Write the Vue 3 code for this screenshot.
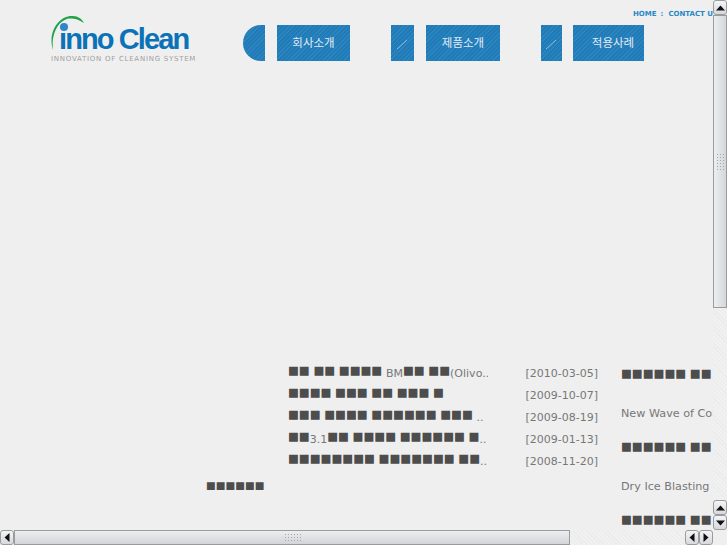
<script setup>
const navItems = [
  { label: '회사소개', cap: 'cap-round', capW: 22, gap: 12, w: 73, next: 41, slash: false, shift: false },
  { label: '제품소개', cap: '', capW: 23, gap: 12, w: 74, next: 41, slash: true, shift: false },
  { label: '적용사례', cap: '', capW: 21, gap: 11, w: 71, next: 0, slash: true, shift: true },
]
const T = (t) => ({ t, k: 'tofu' })
const L = (t) => ({ t, k: 'latin' })
const news = [
  { parts: [T('■■ ■■ ■■■■ '), L('BM'), T('■■ ■■'), L('(Olivo..')], date: '[2010-03-05]' },
  { parts: [T('■■■■ ■■■ ■■ ■■■ ■')], date: '[2009-10-07]' },
  { parts: [T('■■■ ■■■■ ■■■■■■ ■■■ '), L('..')], date: '[2009-08-19]' },
  { parts: [T('■■'), L('3.1'), T('■■ ■■■■ ■■■■■■ ■'), L('..')], date: '[2009-01-13]' },
  { parts: [T('■■■■■■■■ ■■■■■■■ ■■'), L('..')], date: '[2008-11-20]' },
]
const side = [
  { t: '■■■■■■ ■■', k: 'tofu' },
  { t: 'New Wave of Cold Jet', k: 'latin' },
  { t: '■■■■■■ ■■', k: 'tofu' },
  { t: 'Dry Ice Blasting', k: 'latin' },
  { t: '■■■■■■ ■■', k: 'tofu' },
]
</script>

<template>
  <div class="window">
    <main class="viewport">
      <div class="page">
        <header class="header">
          <div class="logo">
            <svg class="logo-mark" width="50" height="44" viewBox="0 0 50 44">
              <path d="M3 37 C-3 18 10 2 23 3 C28 3 32 6 34 10 C28 6 24 5 19 5.5 C9 7 1 20 3 37Z" fill="#1fa24a" />
              <circle cx="14" cy="14" r="4" fill="#2f86c8" />
            </svg>
            <div class="logo-name">inno Clean</div>
            <div class="logo-tag">INNOVATION OF CLEANING SYSTEM</div>
          </div>
          <nav class="nav">
            <div v-for="item in navItems" :key="item.label" class="nav-item" :style="{ marginRight: item.next + 'px' }">
              <div class="hatch cap" :class="item.cap" :style="{ width: item.capW + 'px', marginRight: item.gap + 'px' }">
                <svg v-if="item.slash" width="16" height="16" viewBox="0 0 16 16">
                  <path d="M2 14 L12 5" stroke="#8dbfe0" stroke-width="1" />
                </svg>
              </div>
              <div class="hatch nav-btn" :class="{ shifted: item.shift }" :style="{ width: item.w + 'px' }">{{ item.label }}</div>
            </div>
          </nav>
          <div class="top-links">
            <span>HOME</span><span class="sep">:</span><span>CONTACT US</span>
          </div>
        </header>
        <section class="content">
          <h2 class="side-title">■■■■■■</h2>
          <div class="news">
            <div v-for="row in news" :key="row.date" class="news-row">
              <div class="news-title">
                <span v-for="(p, i) in row.parts" :key="i" :class="p.k">{{ p.t }}</span>
              </div>
              <div class="news-date">{{ row.date }}</div>
            </div>
          </div>
          <ul class="side">
            <li v-for="(s, i) in side" :key="i" :class="s.k">{{ s.t }}</li>
          </ul>
        </section>
      </div>
    </main>

    <aside class="vbar">
      <button class="sb-btn v"><svg width="9" height="6" viewBox="0 0 9 6"><path d="M0 5.5 L4.5 0.5 L9 5.5Z" /></svg></button>
      <div class="thumb v-thumb"><i class="grip v-grip"></i></div>
      <div class="track"></div>
      <button class="sb-btn v"><svg width="9" height="6" viewBox="0 0 9 6"><path d="M0 5.5 L4.5 0.5 L9 5.5Z" /></svg></button>
      <button class="sb-btn v"><svg width="9" height="6" viewBox="0 0 9 6"><path d="M0 0.5 L4.5 5.5 L9 0.5Z" /></svg></button>
    </aside>

    <aside class="hbar">
      <button class="sb-btn h"><svg width="6" height="9" viewBox="0 0 6 9"><path d="M5.5 0 L0.5 4.5 L5.5 9Z" /></svg></button>
      <div class="thumb h-thumb"><i class="grip h-grip"></i></div>
      <div class="track"></div>
      <button class="sb-btn h"><svg width="6" height="9" viewBox="0 0 6 9"><path d="M5.5 0 L0.5 4.5 L5.5 9Z" /></svg></button>
      <button class="sb-btn h"><svg width="6" height="9" viewBox="0 0 6 9"><path d="M0.5 0 L5.5 4.5 L0.5 9Z" /></svg></button>
    </aside>
    <div class="corner"></div>
  </div>
</template>

<style scoped>
.window {
  width: 727px;
  height: 545px;
  display: grid;
  grid-template-columns: 713px 14px;
  grid-template-rows: 530px 15px;
  background: #efefef;
  overflow: hidden;
  font-family: "DejaVu Sans", sans-serif;
}
.viewport { overflow: hidden; min-width: 0; }
.page { width: 900px; }

.header {
  height: 61px;
  display: flex;
  align-items: flex-start;
  padding-left: 51px;
  position: relative;
}
.logo { width: 192px; height: 61px; position: relative; }
.logo-mark { position: absolute; left: -1px; top: 13px; }
.logo-name {
  margin-top: 21px;
  margin-left: 8px;
  font: bold 29px/36px "Liberation Sans", sans-serif;
  letter-spacing: -1.9px;
  color: #0b72b7;
  white-space: nowrap;
}
.logo-tag {
  margin-top: -2px;
  font: 7px/9px "DejaVu Sans", sans-serif;
  letter-spacing: 0.74px;
  color: #a0a0a0;
  white-space: nowrap;
}
.nav { display: flex; padding-top: 25px; }
.nav-item { display: flex; }
.hatch {
  height: 36px;
  background-color: #1f7cb9;
  background-image: repeating-linear-gradient(135deg, rgba(255,255,255,.07) 0 1px, transparent 1px 3px);
}
.cap { display: flex; align-items: center; justify-content: center; }
.cap-round { border-radius: 18px 0 0 18px; }
.nav-btn {
  display: flex;
  align-items: center;
  justify-content: center;
  box-sizing: border-box;
  font: 11.5px/1 "Noto Sans CJK KR", sans-serif;
  color: #e0ebf4;
}
.nav-btn.shifted { padding-left: 9px; }
.top-links {
  position: absolute;
  left: 633px;
  top: 10px;
  font: bold 7px/9px "DejaVu Sans", sans-serif;
  color: #2a88c6;
  white-space: nowrap;
}
.sep { margin: 0 5px 0 4px; }

.content {
  display: flex;
  padding-left: 206px;
  margin-top: 298px;
}
.side-title {
  width: 82px;
  margin: 116px 0 0;
  font: normal 10.3px/20px "DejaVu Sans", sans-serif;
  color: #4d4d4d;
  white-space: nowrap;
}
.news { width: 333px; }
.news-row { display: flex; height: 22px; align-items: flex-start; }
.news-title {
  width: 200px;
  height: 24px;
  margin-top: -1px;
  white-space: nowrap;
  overflow: hidden;
  line-height: 22px;
}
.news-title .latin { vertical-align: -3px; }
.news-date {
  width: 110px;
  text-align: right;
  font-size: 11px;
  line-height: 30px;
  color: #777;
}
.tofu { font-size: 11.5px; color: #4d4d4d; }
.latin { font-size: 11px; color: #777; }
.side { list-style: none; margin: 0; padding: 0; white-space: nowrap; }
.side li { height: 36.5px; line-height: 28px; }
.side li.latin { font-size: 11.2px; line-height: 36px; }

.vbar { display: flex; flex-direction: column; }
.hbar { display: flex; }
.vbar .track, .hbar .track {
  flex: 1;
  background-color: #f1f1f1;
  background-image: repeating-linear-gradient(45deg, #ebebeb 0 1px, transparent 1px 3px);
}
.corner { background: #efefef; }
.sb-btn {
  flex: none;
  padding: 0;
  display: flex;
  align-items: center;
  justify-content: center;
  border: 1px solid #9b9b9b;
  border-radius: 3px;
  background: linear-gradient(#f4f5f7, #d6d8dc);
}
.sb-btn svg { fill: #111; display: block; }
.sb-btn.v { width: 14px; height: 15px; }
.sb-btn.h { width: 14px; height: 15px; }
.thumb {
  flex: none;
  border: 1px solid #9b9b9b;
  box-sizing: border-box;
  display: flex;
  align-items: center;
  justify-content: center;
}
.v-thumb {
  height: 293px;
  background: linear-gradient(90deg, #eceef2, #d4d6da);
  align-items: flex-start;
}
.h-thumb {
  width: 556px;
  height: 15px;
  background: linear-gradient(#eceef2, #d2d4d8);
  justify-content: flex-start;
}
.grip {
  display: block;
  background-image: radial-gradient(#a6a6a6 0.8px, transparent 1px);
  background-size: 3px 3px;
}
.v-grip { width: 9px; height: 18px; margin-top: 137px; }
.h-grip { width: 18px; height: 9px; margin-left: 269px; }
</style>

<style>
html, body { margin: 0; background: #efefef; }
</style>
